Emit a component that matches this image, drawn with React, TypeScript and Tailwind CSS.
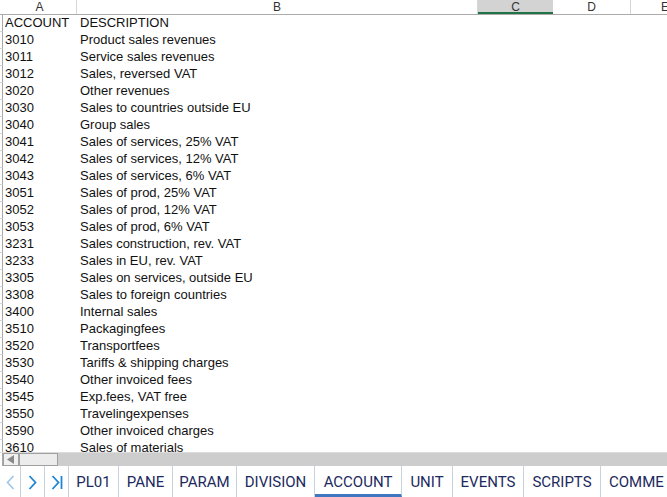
import React from "react";

const rows: [string, string][] = [
  ["ACCOUNT", "DESCRIPTION"],
  ["3010", "Product sales revenues"],
  ["3011", "Service sales revenues"],
  ["3012", "Sales, reversed VAT"],
  ["3020", "Other revenues"],
  ["3030", "Sales to countries outside EU"],
  ["3040", "Group sales"],
  ["3041", "Sales of services, 25% VAT"],
  ["3042", "Sales of services, 12% VAT"],
  ["3043", "Sales of services, 6% VAT"],
  ["3051", "Sales of prod, 25% VAT"],
  ["3052", "Sales of prod, 12% VAT"],
  ["3053", "Sales of prod, 6% VAT"],
  ["3231", "Sales construction, rev. VAT"],
  ["3233", "Sales in EU, rev. VAT"],
  ["3305", "Sales on services, outside EU"],
  ["3308", "Sales to foreign countries"],
  ["3400", "Internal sales"],
  ["3510", "Packagingfees"],
  ["3520", "Transportfees"],
  ["3530", "Tariffs & shipping charges"],
  ["3540", "Other invoiced fees"],
  ["3545", "Exp.fees, VAT free"],
  ["3550", "Travelingexpenses"],
  ["3590", "Other invoiced charges"],
  ["3610", "Sales of materials"],
];

const tabs: { name: string; w: string; active?: boolean }[] = [
  { name: "PL01", w: "w-[50px]" },
  { name: "PANE", w: "w-[54px]" },
  { name: "PARAM", w: "w-[64px]" },
  { name: "DIVISION", w: "w-[78px]" },
  { name: "ACCOUNT", w: "w-[87px]", active: true },
  { name: "UNIT", w: "w-[51px]" },
  { name: "EVENTS", w: "w-[71px]" },
  { name: "SCRIPTS", w: "w-[77px]" },
];

export default function App() {
  return (
    <div
      className="w-[667px] h-[497px] overflow-hidden flex flex-col bg-white"
      style={{ fontFamily: '"Liberation Sans", Arial, sans-serif' }}
    >
      {/* column header */}
      <div className="h-[15px] shrink-0 flex border-b border-[#ababab] text-[12px] leading-[14px] text-[#333] overflow-hidden">
        <div className="w-[3px] shrink-0" />
        <div className="w-[74px] shrink-0 border-r border-[#d6d6d6] text-center">A</div>
        <div className="w-[401px] shrink-0 border-r border-[#d6d6d6] text-center">B</div>
        <div className="w-[75px] shrink-0 bg-[#d3d3d3] border-b-2 border-[#217346] text-center">C</div>
        <div className="w-[78px] shrink-0 border-r border-[#d6d6d6] text-center">D</div>
        <div className="w-[68px] shrink-0 text-center">E</div>
      </div>

      {/* rows */}
      <div className="flex-1 overflow-hidden flex flex-col">
        {rows.map(([a, b], i) => (
          <div key={i} className="h-[17px] shrink-0 flex text-[13px] leading-[15px] text-[#111]">
            <div className="w-[3px] shrink-0 border-r border-b border-r-[#a8a8a8] border-b-[#d4d4d4]" />
            <div className="w-[74px] shrink-0 pl-[2px] whitespace-nowrap">{a}</div>
            <div className="flex-1 pl-[3px] whitespace-nowrap">{b}</div>
          </div>
        ))}
      </div>

      {/* horizontal scrollbar */}
      <div className="h-[14px] shrink-0 flex bg-[#cdcdcd] border-t border-[#dcdcdc]">
        <div className="w-[3px] shrink-0 bg-white border-r border-[#a8a8a8]" />
        <div className="w-[16px] shrink-0 bg-[#f0f0f0] border border-[#a0a0a0] flex items-center justify-center">
          <svg width="8" height="9" viewBox="0 0 8 9">
            <polygon points="7,0 7,9 0,4.5" fill="#8a8a8a" />
          </svg>
        </div>
        <div className="w-[39px] shrink-0 bg-[#ececec] border border-[#a0a0a0]" />
        <div className="flex-1" />
      </div>

      {/* sheet tabs */}
      <div
        className="h-[31px] shrink-0 flex bg-white text-[15px] text-[#1c2a5e]"
        style={{ fontFamily: 'Roboto, "Liberation Sans", sans-serif' }}
      >
        <div className="w-[21px] shrink-0 flex items-center justify-center border-r border-[#c9d3de] pt-[1px]">
          <svg width="9" height="15" viewBox="0 0 9 15">
            <polyline points="7.5,1 1.5,7.5 7.5,14" fill="none" stroke="#9cc5ec" strokeWidth="1.6" />
          </svg>
        </div>
        <div className="w-[24px] shrink-0 flex items-center justify-center border-r border-[#c9d3de] pt-[1px]">
          <svg width="9" height="15" viewBox="0 0 9 15">
            <polyline points="1.5,1 7.5,7.5 1.5,14" fill="none" stroke="#1e86d6" strokeWidth="1.8" />
          </svg>
        </div>
        <div className="w-[24px] shrink-0 flex items-center justify-center border-r border-[#c9d3de] pt-[1px]">
          <svg width="12" height="15" viewBox="0 0 12 15">
            <polyline points="1.5,1 7.5,7.5 1.5,14" fill="none" stroke="#1e86d6" strokeWidth="1.8" />
            <line x1="10.5" y1="1" x2="10.5" y2="14" stroke="#1e86d6" strokeWidth="1.8" />
          </svg>
        </div>
        {tabs.map((t) => (
          <div
            key={t.name}
            className={`${t.w} shrink-0 flex items-center justify-center border-r border-[#c9d3de] whitespace-nowrap overflow-hidden ${
              t.active ? "border-b-[3px] border-b-[#3f76bf] pt-[5px]" : "pt-[2px]"
            }`}
          >
            {t.name}
          </div>
        ))}
        <div className="w-[63px] shrink-0 flex items-center pl-[8px] pt-[2px] whitespace-nowrap overflow-hidden">
          COMME
        </div>
      </div>
    </div>
  );
}
